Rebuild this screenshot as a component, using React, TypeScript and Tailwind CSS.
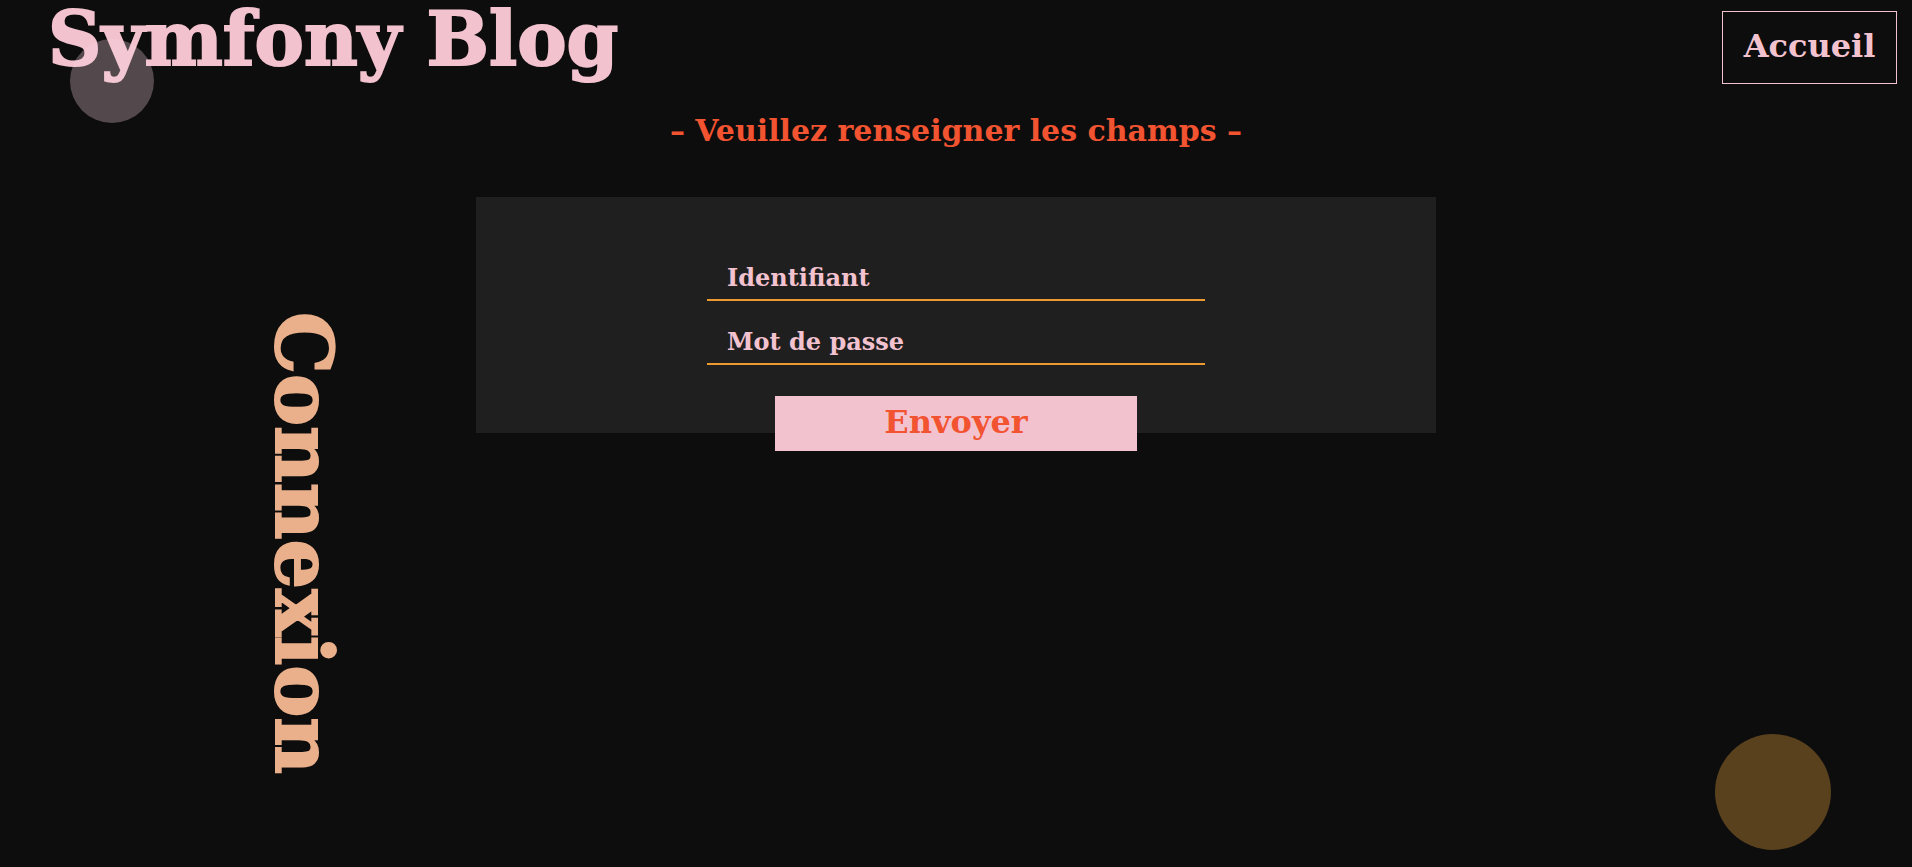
export default function App() {
  return (
    <div className="relative flex min-h-screen flex-col overflow-hidden bg-[#0d0d0d] font-['DejaVu_Serif',serif] font-bold text-[#f3c2cf]">
      <header className="flex items-start justify-between pt-[11px] pr-[15px] pl-12">
        <p className="text-[74px] leading-[56px] [-webkit-text-stroke:2px_currentColor]">Symfony Blog</p>
        <a
          href="#accueil"
          className="flex h-[73px] w-[175px] items-center justify-center border border-[#f3c2cf] pb-1 text-[32px] leading-none"
        >
          Accueil
        </a>
      </header>

      <main className="grid grid-cols-[1fr_minmax(0,960px)_1fr]">
        <h2 className="col-span-3 mt-[30px] text-center text-[30px] leading-[34px] text-[#f25330]">
          – Veuillez renseigner les champs –
        </h2>
        <div className="flex items-start justify-end pt-[164px] pr-[135px]">
          <h1 className="text-[78px] leading-[76px] text-[#eab08b] [writing-mode:vertical-rl] [-webkit-text-stroke:2px_currentColor]">
            Connexion
          </h1>
        </div>
        <form className="mt-[49px] flex h-[236px] flex-col items-center bg-[#1f1f1f] pt-[58px]">
          <input
            type="text"
            aria-label="Identifiant"
            placeholder="Identifiant"
            className="h-[46px] w-[498px] max-w-full shrink-0 border-b-2 border-[#ea9a30] bg-transparent px-5 text-2xl placeholder:text-[#f3c2cf] focus:outline-none"
          />
          <input
            type="password"
            aria-label="Mot de passe"
            placeholder="Mot de passe"
            className="mt-[18px] h-[46px] w-[498px] max-w-full shrink-0 border-b-2 border-[#ea9a30] bg-transparent px-5 text-2xl placeholder:text-[#f3c2cf] focus:outline-none"
          />
          <button
            type="submit"
            className="mt-[31px] h-[55px] w-[362px] max-w-full shrink-0 bg-[#f3c2cf] pb-1 text-[32px] leading-none text-[#f25330]"
          >
            Envoyer
          </button>
        </form>
      </main>

      <div className="pointer-events-none absolute top-[39px] left-[70px] size-[84px] rounded-full bg-[#f6d4dd]/30" />
      <div className="pointer-events-none absolute right-[81px] bottom-[17px] size-[116px] rounded-full bg-[#5a411e]" />
    </div>
  );
}
